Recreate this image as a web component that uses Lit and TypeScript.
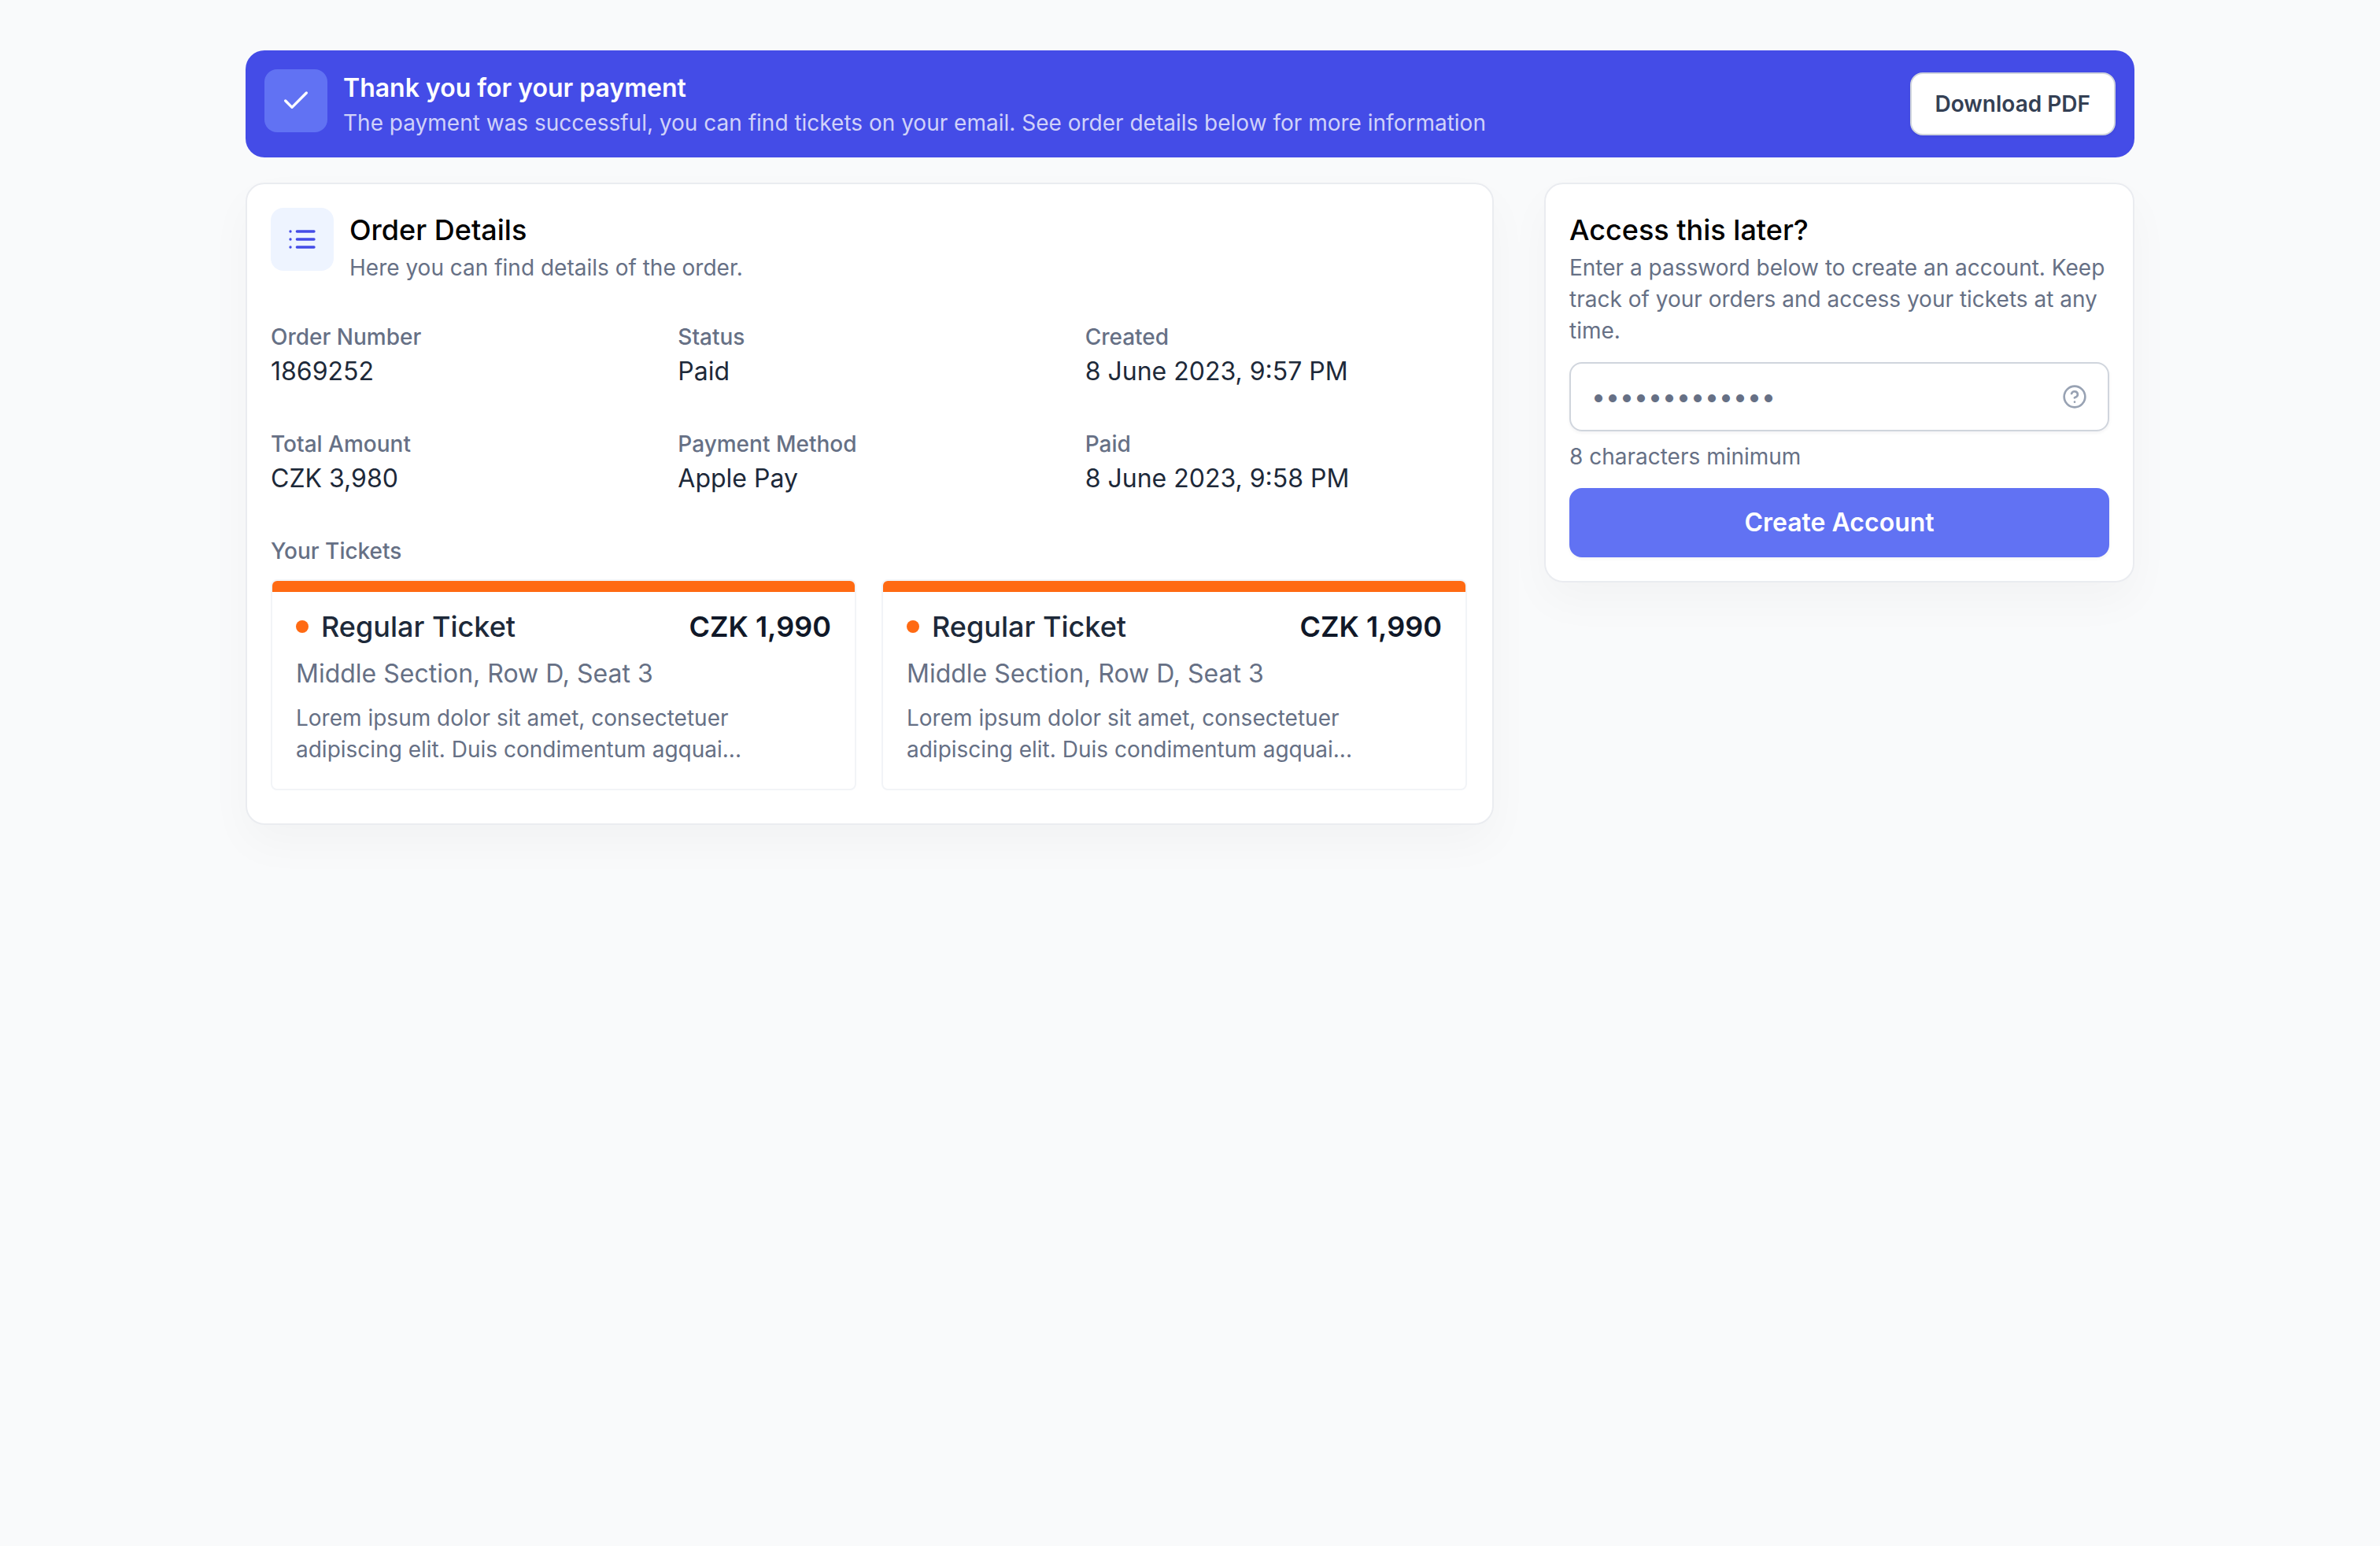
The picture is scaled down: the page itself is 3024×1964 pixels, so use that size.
import { LitElement, html, css, svg } from "lit";
import { customElement, property } from "lit/decorators.js";

interface Detail {
  label: string;
  value: string;
}

interface Ticket {
  name: string;
  price: string;
  seat: string;
  note: string;
}

const DETAILS: Detail[] = [
  { label: "Order Number", value: "1869252" },
  { label: "Status", value: "Paid" },
  { label: "Created", value: "8 June 2023, 9:57 PM" },
  { label: "Total Amount", value: "CZK 3,980" },
  { label: "Payment Method", value: "Apple Pay" },
  { label: "Paid", value: "8 June 2023, 9:58 PM" },
];

const TICKET: Ticket = {
  name: "Regular Ticket",
  price: "CZK 1,990",
  seat: "Middle Section, Row D, Seat 3",
  note: "Lorem ipsum dolor sit amet, consectetuer adipiscing elit. Duis condimentum agquai...",
};

const TICKETS: Ticket[] = [TICKET, { ...TICKET }];

const checkIcon = svg`<path d="M16.67 5 7.5 14.17 3.33 10" />`;
const listIcon = svg`<path d="M17.5 10H6.67M17.5 5H6.67M17.5 15H6.67M2.5 10h.01M2.5 5h.01M2.5 15h.01" />`;

const base = css`
  *,
  *::before {
    box-sizing: border-box;
  }
  h1,
  h2,
  h3,
  p,
  dl,
  dd,
  ul {
    margin: 0;
    padding: 0;
  }
  .icon {
    display: block;
    fill: none;
    stroke: currentColor;
    stroke-linecap: round;
    stroke-linejoin: round;
  }
`;

@customElement("ticket-card")
export class TicketCard extends LitElement {
  @property({ attribute: false }) ticket: Ticket = TICKET;

  static styles = [
    base,
    css`
      :host {
        display: block;
      }
      .ticket {
        border: 2px solid #f2f4f7;
        border-radius: 8px;
        background: #fff;
        overflow: hidden;
      }
      .ticket::before {
        content: "";
        display: block;
        height: 14px;
        background: #ff6a13;
      }
      .body {
        padding: 16px 30px 30px;
      }
      .head {
        display: flex;
        align-items: center;
        gap: 16px;
        margin-bottom: 8px;
        font-size: 36px;
        line-height: 56px;
      }
      .dot {
        flex: none;
        width: 16px;
        height: 16px;
        border-radius: 50%;
        background: #ff6a13;
      }
      .name {
        flex: 1;
        font: inherit;
        font-weight: 500;
        color: #1d2939;
      }
      .price {
        font-weight: 600;
        color: #101828;
      }
      .seat {
        margin-bottom: 12px;
        font-size: 32px;
        line-height: 48px;
      }
      .note {
        max-width: 600px;
        font-size: 28px;
        line-height: 40px;
      }
    `,
  ];

  render() {
    const { name, price, seat, note } = this.ticket;
    return html`
      <article class="ticket">
        <div class="body">
          <div class="head">
            <span class="dot"></span>
            <h3 class="name">${name}</h3>
            <span class="price">${price}</span>
          </div>
          <p class="seat">${seat}</p>
          <p class="note">${note}</p>
        </div>
      </article>
    `;
  }
}

@customElement("app-root")
export class AppRoot extends LitElement {
  static styles = [
    base,
    css`
      :host {
        display: block;
        min-height: 100vh;
        background: #f9fafb;
        color: #667085;
        font-family: Inter, "Liberation Sans", sans-serif;
        font-size: 28px;
        line-height: 40px;
      }
      .page {
        display: grid;
        gap: 32px;
        max-width: 2400px;
        margin: 0 auto;
        padding: 64px 0;
      }
      .banner {
        display: flex;
        align-items: center;
        gap: 20px;
        padding: 24px;
        border-radius: 24px;
        background: #444ce7;
        color: #d0d2f9;
      }
      .tile {
        display: grid;
        place-items: center;
        flex: none;
        align-self: flex-start;
        width: 80px;
        height: 80px;
        border-radius: 16px;
        background: #eef4ff;
        color: #444ce7;
      }
      .tile-light {
        background: #6172f3;
        color: #fff;
      }
      .grow {
        flex: 1;
      }
      .banner-title {
        font-size: 32px;
        line-height: 48px;
        font-weight: 600;
        color: #fff;
      }
      .button {
        height: 80px;
        padding: 0 30px;
        border: 2px solid #d0d5dd;
        border-radius: 16px;
        background: #fff;
        box-shadow: 0 2px 4px rgba(16, 24, 40, 0.05);
        color: #344054;
        font: inherit;
        font-weight: 600;
        cursor: pointer;
      }
      .button-primary {
        width: 100%;
        height: 88px;
        border-color: #6172f3;
        background: #6172f3;
        color: #fff;
        font-size: 32px;
      }
      .columns {
        display: grid;
        grid-template-columns: 1586fr 750fr;
        align-items: start;
        gap: 64px;
      }
      .card {
        padding: 30px;
        border: 2px solid #eaecf0;
        border-radius: 24px;
        background: #fff;
        box-shadow: 0 24px 56px rgba(16, 24, 40, 0.03);
      }
      .order {
        padding-right: 32px;
        padding-bottom: 42px;
      }
      .order-head {
        display: flex;
        gap: 20px;
        margin-bottom: 48px;
      }
      .title {
        font-size: 36px;
        line-height: 56px;
        font-weight: 500;
        color: #000;
      }
      .details {
        display: grid;
        grid-template-columns: repeat(3, 1fr);
        gap: 48px 32px;
        margin-bottom: 48px;
      }
      .label {
        font: inherit;
        font-weight: 500;
      }
      .value {
        font-size: 32px;
        line-height: 48px;
        color: #1d2939;
      }
      .tickets {
        display: grid;
        grid-template-columns: repeat(2, 1fr);
        gap: 32px;
        margin-top: 16px;
        list-style: none;
      }
      .field {
        display: flex;
        align-items: center;
        height: 88px;
        margin: 20px 0 12px;
        padding: 0 26px;
        border: 2px solid #d0d5dd;
        border-radius: 16px;
        box-shadow: 0 2px 4px rgba(16, 24, 40, 0.05);
        color: #98a2b3;
      }
      .input {
        flex: 1;
        min-width: 0;
        padding: 0;
        border: 0;
        outline: 0;
        background: none;
        color: #667085;
        font: inherit;
        font-size: 32px;
      }
      .hint {
        display: block;
        margin-bottom: 20px;
      }
    `,
  ];

  render() {
    return html`
      <main class="page">
        <section class="banner">
          <div class="tile tile-light">
            <svg class="icon" width="40" height="40" viewBox="0 0 20 20" stroke-width="1.67" aria-hidden="true">${checkIcon}</svg>
          </div>
          <div class="grow">
            <h1 class="banner-title">Thank you for your payment</h1>
            <p>The payment was successful, you can find tickets on your email. See order details below for more information</p>
          </div>
          <button class="button" type="button">Download PDF</button>
        </section>

        <div class="columns">
          <section class="card order">
            <header class="order-head">
              <div class="tile">
                <svg class="icon" width="40" height="40" viewBox="0 0 20 20" stroke-width="1.67" aria-hidden="true">${listIcon}</svg>
              </div>
              <div>
                <h2 class="title">Order Details</h2>
                <p>Here you can find details of the order.</p>
              </div>
            </header>
            <dl class="details">
              ${DETAILS.map(
                (d) => html`<div>
                  <dt class="label">${d.label}</dt>
                  <dd class="value">${d.value}</dd>
                </div>`
              )}
            </dl>
            <h3 class="label">Your Tickets</h3>
            <ul class="tickets">
              ${TICKETS.map((t) => html`<li><ticket-card .ticket=${t}></ticket-card></li>`)}
            </ul>
          </section>

          <form class="card" @submit=${(e: Event) => e.preventDefault()}>
            <h2 class="title">Access this later?</h2>
            <p>Enter a password below to create an account. Keep track of your orders and access your tickets at any time.</p>
            <div class="field">
              <input class="input" id="password" type="password" value="correcthorse1" autocomplete="new-password" />
              <svg class="icon" width="32" height="32" viewBox="0 0 16 16" stroke-width="1.33" aria-hidden="true">
                <circle cx="8" cy="8" r="6.67" />
                <path d="M6.06 6a2 2 0 0 1 3.89.67c0 1.33-2 2-2 2M8 11.33h.01" />
              </svg>
            </div>
            <label class="hint" for="password">8 characters minimum</label>
            <button class="button button-primary" type="submit">Create Account</button>
          </form>
        </div>
      </main>
    `;
  }
}
